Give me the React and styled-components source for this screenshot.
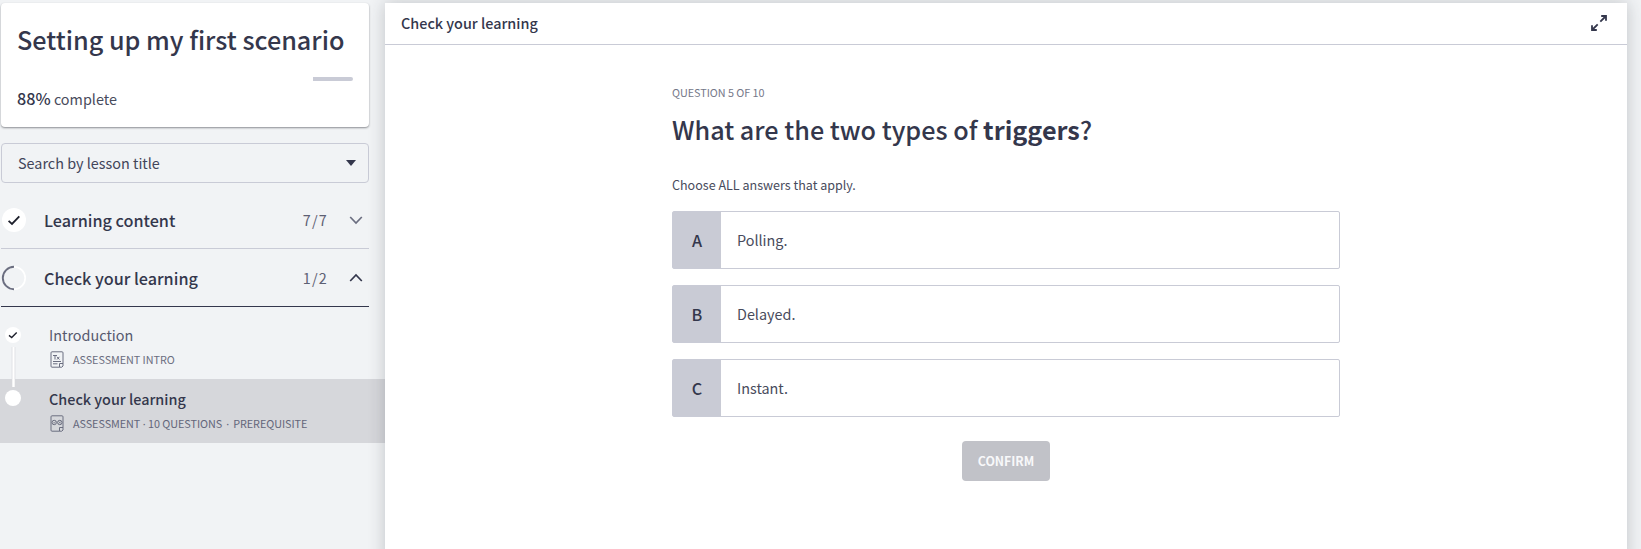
import React from 'react';
import styled, { createGlobalStyle, css } from 'styled-components';

const ink = '#34374c';
const muted = '#6b6e80';
const line = '#c9cbd6';

const GlobalStyle = createGlobalStyle`
  * { box-sizing: border-box; }
  body {
    margin: 0;
    background: #f1f3f5;
    color: ${ink};
    font-family: "Noto Sans CJK SC", "Noto Sans", sans-serif;
  }
`;

const type = css`
  font-size: ${(p) => p.$size}px;
  line-height: ${(p) => p.$lh || 20}px;
  font-weight: ${(p) => p.$weight || 400};
  letter-spacing: ${(p) => p.$track || 0}px;
  color: ${(p) => p.$color || ink};
  white-space: nowrap;
`;

const Label = styled.span`${type}`;
const Block = styled.div`${type}`;
const Title = styled.h1`
  ${type}
  margin: 0;
`;
const Strong = styled.b`
  font-weight: 700;
`;
const Percent = styled.span`
  color: ${ink};
  font-size: 16.2px;
  font-weight: 500;
`;

const Page = styled.div`
  display: flex;
  height: 549px;
  overflow: hidden;
  background: #f1f3f5;
`;

const Sidebar = styled.aside`
  width: 385px;
  flex: none;
  padding-top: 3px;
`;

const ProgressCard = styled.section`
  width: 368px;
  height: 124px;
  margin-left: 1px;
  padding: 18px 16px 0;
  border-radius: 4px;
  background: #fff;
  box-shadow: 0 1px 2px rgba(40, 42, 50, 0.5);
`;

const Track = styled.div`
  display: flex;
  justify-content: flex-end;
  height: 4px;
  margin: 20px 0 7px;
`;

const Remaining = styled.div`
  width: 40px;
  border-radius: 0 2px 2px 0;
  background: ${line};
`;

const SearchSelect = styled.div`
  display: flex;
  align-items: center;
  justify-content: space-between;
  width: 368px;
  height: 40px;
  margin: 16px 0 8px 1px;
  padding: 0 12px 1px 16px;
  border: 1px solid ${line};
  border-radius: 4px;
`;

const Caret = styled.svg`
  width: 10px;
  height: 6px;
  margin-top: 1px;
`;

const SectionRow = styled.div`
  display: flex;
  align-items: center;
  width: 368px;
  height: 58px;
  margin-left: 1px;
  padding-right: 6px;
  border-bottom: 1px solid ${(p) => (p.$open ? ink : line)};
`;

const StatusIcon = styled.svg`
  flex: none;
  width: 26px;
  height: 26px;
`;

const SectionName = styled(Label)`
  flex: 1;
  margin-left: 17px;
`;

const Chevron = styled.svg`
  width: 14px;
  height: 10px;
  margin-left: 21px;
`;

const LessonList = styled.div`
  padding-top: 8px;
`;

const Lesson = styled.div`
  display: flex;
  height: 64px;
  background: ${(p) => (p.$active ? '#d6d7db' : 'transparent')};
`;

const Rail = styled.svg`
  flex: none;
  width: 49px;
  height: 64px;
`;

const LessonText = styled.div`
  padding-top: 10px;
`;

const Meta = styled.div`
  display: flex;
  align-items: center;
  gap: 9px;
  height: 20px;
  margin-top: 4px;
  padding-left: 1px;
`;

const Dot = styled.span`
  margin: 0 ${(p) => p.$gap}px;
  font-family: "Noto Sans", sans-serif;
`;

const DocIcon = styled.svg`
  flex: none;
  width: 14px;
  height: 17px;
`;

const Player = styled.main`
  position: relative;
  width: 1242px;
  height: 560px;
  margin-top: 3px;
  background: #fff;
  box-shadow: 0 0 16px rgba(40, 44, 56, 0.24);
`;

const PlayerHeader = styled.header`
  display: flex;
  align-items: center;
  justify-content: space-between;
  height: 42px;
  padding: 0 20px 1px 16px;
  border-bottom: 1px solid ${line};
`;

const ExpandIcon = styled.svg`
  width: 16px;
  height: 16px;
`;

const Question = styled.section`
  display: flex;
  flex-direction: column;
  width: 668px;
  margin: 0 auto;
  padding-top: 37px;
`;

const QuestionTitle = styled(Title)`
  margin-top: 9px;
`;

const Hint = styled(Block)`
  margin: 28px 0 16px;
`;

const Answers = styled.div`
  display: grid;
  gap: 16px;
`;

const Answer = styled.div`
  display: flex;
  align-items: center;
  height: 58px;
  border: 1px solid ${line};
  border-radius: 2px;
`;

const Letter = styled.div`
  display: grid;
  place-items: center;
  width: 48px;
  height: 100%;
  margin-right: 16px;
  background: #c9cbd5;
`;

const Confirm = styled.button`
  ${type}
  align-self: center;
  width: 88px;
  height: 40px;
  margin-top: 24px;
  padding: 0;
  border: 0;
  border-radius: 4px;
  background: #c1c2c8;
  font-family: inherit;
`;

const answers = [
  ['A', 'Polling.'],
  ['B', 'Delayed.'],
  ['C', 'Instant.'],
];

export default function App() {
  return (
    <Page>
      <GlobalStyle />
      <Sidebar>
        <ProgressCard>
          <Title $size={25.2} $lh={36} $weight={500}>Setting up my first scenario</Title>
          <Track><Remaining /></Track>
          <Block $size={14.4} $lh={20} $color="#484b5c"><Percent>88%</Percent> complete</Block>
        </ProgressCard>
        <SearchSelect>
          <Label $size={14.4} $color="#42455a">Search by lesson title</Label>
          <Caret viewBox="0 0 10 6"><path d="M0 0h10L5 6z" fill={ink} /></Caret>
        </SearchSelect>

        <SectionRow>
          <StatusIcon viewBox="0 0 26 26">
            <circle cx="13" cy="13" r="12" fill="#fff" />
            <path d="M7.6 13.8l3.4 3.1 7.3-7.6" fill="none" stroke="#1d1f2b" strokeWidth="1.8" />
          </StatusIcon>
          <SectionName $size={16.2} $weight={500}>Learning content</SectionName>
          <Label $size={14.4} $track={1.2} $color="#5d6073">7/7</Label>
          <Chevron viewBox="0 0 14 10"><path d="M1.2 2l5.8 6 5.8-6" fill="none" stroke={muted} strokeWidth="1.7" /></Chevron>
        </SectionRow>
        <SectionRow $open>
          <StatusIcon viewBox="0 0 26 26">
            <circle cx="13" cy="13" r="11.2" fill="none" stroke="#fff" strokeWidth="1.7" />
            <path d="M13 1.8a11.2 11.2 0 0 0 0 22.4" fill="none" stroke={muted} strokeWidth="1.9" />
          </StatusIcon>
          <SectionName $size={16.2} $weight={500}>Check your learning</SectionName>
          <Label $size={14.4} $track={1.2} $color="#5d6073">1/2</Label>
          <Chevron viewBox="0 0 14 10"><path d="M1.2 8L7 2l5.8 6" fill="none" stroke={ink} strokeWidth="1.7" /></Chevron>
        </SectionRow>

        <LessonList>
          <Lesson>
            <Rail viewBox="0 0 49 64">
              <circle cx="13" cy="20" r="8" fill="#fff" />
              <path d="M9 20.4l2.7 2.2 5-5" fill="none" stroke="#1d1f2b" strokeWidth="1.4" />
              <path d="M12.2 32v32M14.8 32v32" stroke="#d3d4d9" strokeWidth=".8" />
              <path d="M13.5 32v32" stroke="#fff" strokeWidth="2" />
            </Rail>
            <LessonText>
              <Block $size={14.4} $color="#56596e">Introduction</Block>
              <Meta>
                <DocIcon viewBox="0 0 14 17" fill="none" stroke={muted} strokeWidth="1">
                  <path d="M9.5 16.2H2a1 1 0 0 1-1-1V1.8a1 1 0 0 1 1-1h10a1 1 0 0 1 1 1V15l-1.2 1.2H9.5v-3.7H13" />
                  <path d="M3 4.5h4M5 4.5v4M7 5.8l2.4 2.7M9.4 5.8L7 8.5M3 10.5h8M3 12.8h4.5" />
                </DocIcon>
                <Label $size={10.8} $track={-0.05} $color={muted}>ASSESSMENT INTRO</Label>
              </Meta>
            </LessonText>
          </Lesson>
          <Lesson $active>
            <Rail viewBox="0 0 49 64">
              <path d="M13.5 0v8" stroke="#fff" strokeWidth="2.4" />
              <circle cx="13" cy="19" r="8" fill="#fff" />
            </Rail>
            <LessonText>
              <Block $size={14.4} $weight={500}>Check your learning</Block>
              <Meta>
                <DocIcon viewBox="0 0 14 17" fill="none" stroke={muted} strokeWidth="1">
                  <path d="M9.5 16.2H2a1 1 0 0 1-1-1V1.8a1 1 0 0 1 1-1h10a1 1 0 0 1 1 1V15l-1.2 1.2H9.5v-3.7H13" />
                  <circle cx="4.2" cy="7.5" r="2.2" />
                  <circle cx="9.8" cy="7.5" r="2.2" />
                  <path d="M3.2 7.4l.9.9 1.5-1.7M8.8 6.5l2 2M10.8 6.5l-2 2" strokeWidth=".8" />
                </DocIcon>
                <Label $size={10.8} $track={-0.05} $color="#63667a">
                  ASSESSMENT<Dot $gap={2.5}>·</Dot>10 QUESTIONS<Dot $gap={4.1}>·</Dot>PREREQUISITE
                </Label>
              </Meta>
            </LessonText>
          </Lesson>
        </LessonList>
      </Sidebar>

      <Player>
        <PlayerHeader>
          <Label $size={14.4} $weight={500}>Check your learning</Label>
          <ExpandIcon viewBox="0 0 16 16" fill="none" stroke={ink} strokeWidth="1.8">
            <path d="M9.3 6.7L15 1M10.2 1H15v4.8M6.7 9.3L1 15M1 10.2V15h4.8" />
          </ExpandIcon>
        </PlayerHeader>
        <Question>
          <Block $size={10.8} $track={-0.03} $color="#757889">QUESTION 5 OF 10</Block>
          <QuestionTitle $size={25.2} $lh={36} $weight={500}>
            What are the two types of <Strong>triggers</Strong>?
          </QuestionTitle>
          <Hint $size={12.54} $color="#484b5c">Choose ALL answers that apply.</Hint>
          <Answers>
            {answers.map(([letter, text]) => (
              <Answer key={letter}>
                <Letter><Label $size={16.2} $weight={500}>{letter}</Label></Letter>
                <Label $size={14.4} $color="#484b5c">{text}</Label>
              </Answer>
            ))}
          </Answers>
          <Confirm $size={12.3} $weight={700} $color="#f8f8fa">CONFIRM</Confirm>
        </Question>
      </Player>
    </Page>
  );
}
